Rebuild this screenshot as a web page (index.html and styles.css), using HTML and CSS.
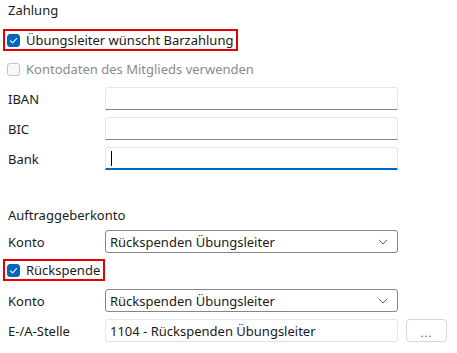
FILE: index.html
```html
<!DOCTYPE html>
<html>
<head>
<meta charset="utf-8">
<link rel="stylesheet" href="styles.css">
</head>
<body>
<div class="form">
  <div class="heading h1">Zahlung</div>
  <div class="check-row r1">
    <label class="check highlight">
      <span class="box checked"><svg viewBox="0 0 13 13" width="13" height="13"><path d="M3.5 6.8 L5.6 8.8 L9.6 4.6" fill="none" stroke="#fff" stroke-width="1.1" stroke-linecap="round" stroke-linejoin="round"/></svg></span>
      <span class="ctext">Übungsleiter wünscht Barzahlung</span>
    </label>
  </div>
  <div class="check-row r2">
    <label class="check disabled">
      <span class="box"></span>
      <span class="ctext">Kontodaten des Mitglieds verwenden</span>
    </label>
  </div>
  <div class="row first">
    <span class="label">IBAN</span>
    <span class="input"></span>
  </div>
  <div class="row">
    <span class="label">BIC</span>
    <span class="input"></span>
  </div>
  <div class="row">
    <span class="label">Bank</span>
    <span class="input focused"><span class="caret"></span></span>
  </div>
  <div class="heading h2">Auftraggeberkonto</div>
  <div class="row konto1">
    <span class="label">Konto</span>
    <span class="select"><span class="val">Rückspenden Übungsleiter</span><svg class="chev" viewBox="0 0 10 6" width="10" height="6"><path d="M0.8 0.8 L5 5 L9.2 0.8" fill="none" stroke="#5f5f5f" stroke-width="1"/></svg></span>
  </div>
  <div class="check-row r3">
    <label class="check highlight">
      <span class="box checked"><svg viewBox="0 0 13 13" width="13" height="13"><path d="M3.5 6.8 L5.6 8.8 L9.6 4.6" fill="none" stroke="#fff" stroke-width="1.1" stroke-linecap="round" stroke-linejoin="round"/></svg></span>
      <span class="ctext">Rückspende</span>
    </label>
  </div>
  <div class="row konto2">
    <span class="label">Konto</span>
    <span class="select"><span class="val">Rückspenden Übungsleiter</span><svg class="chev" viewBox="0 0 10 6" width="10" height="6"><path d="M0.8 0.8 L5 5 L9.2 0.8" fill="none" stroke="#5f5f5f" stroke-width="1"/></svg></span>
  </div>
  <div class="row">
    <span class="label">E-/A-Stelle</span>
    <span class="input plain"><span class="val">1104 - Rückspenden Übungsleiter</span></span>
    <span class="btn">...</span>
  </div>
</div>
</body>
</html>
```
FILE: styles.css
```css
* { box-sizing: border-box; }
html, body { margin: 0; padding: 0; background: #fff; }
body {
  font-family: "Noto Sans", "Liberation Sans", sans-serif;
  font-size: 13px;
  color: #1a1a1a;
  width: 457px;
  height: 353px;
  overflow: hidden;
}
.form { display: flex; flex-direction: column; align-items: flex-start; }
.heading { padding-left: 8px; height: 20px; line-height: 20px; white-space: nowrap; }
.h1 { margin-top: 0; }
.h2 { margin-top: 35px; }
.check-row { display: flex; padding-left: 3px; }
.r1 { margin-top: 9px; }
.r2 { margin-top: 7px; }
.r3 { margin-top: 6px; }
.check {
  display: flex; align-items: center; gap: 6px;
  height: 22px;
  padding: 0 3px 0 2px;
  border: 2px solid transparent;
  white-space: nowrap;
}
.check.highlight { border-color: #e60000; }
.box {
  width: 13px; height: 13px; border-radius: 3px;
  border: 1px solid #a8a8a8; background: #f7f7f7;
  display: inline-flex; flex: none;
}
.box.checked { background: #0067c0; border-color: #0067c0; }
.box svg { margin: -1px; }
.disabled { color: #8a8a8a; }
.disabled .box { border-color: #c4c4c4; background: #f9f9f9; }
.row { display: flex; align-items: center; height: 23px; margin-top: 7px; }
.row.first { margin-top: 7px; }
.row.konto1 { margin-top: 5px; }
.row.konto2 { margin-top: 8px; }
.label { width: 105px; padding-left: 8px; flex: none; white-space: nowrap; }
.input {
  width: 293px; height: 23px; flex: none;
  border: 1px solid #e6e6e6; border-bottom-color: #868686;
  border-radius: 3px 3px 0 0;
  display: flex; align-items: center; padding-left: 4px;
  background: #fff;
}
.input.focused { border-bottom: 2px solid #0067c0; }
.input.plain { border-bottom-color: #e0e0e0; border-radius: 3px; }
.caret { width: 1px; height: 15px; background: #000; margin-left: 1px; }
.select {
  width: 293px; height: 23px; flex: none;
  border: 1px solid #858585; border-radius: 3px;
  display: flex; align-items: center; justify-content: space-between;
  padding: 0 9px 0 4px;
  background: #fff;
}
.val { white-space: nowrap; }
.btn {
  margin-left: 8px; width: 41px; height: 23px;
  border: 1px solid #d6d6d6; border-radius: 4px;
  color: #2a5bd0; font-size: 11px; letter-spacing: 1px;
  display: flex; align-items: center; justify-content: center;
  padding-top: 4px;
}
```
